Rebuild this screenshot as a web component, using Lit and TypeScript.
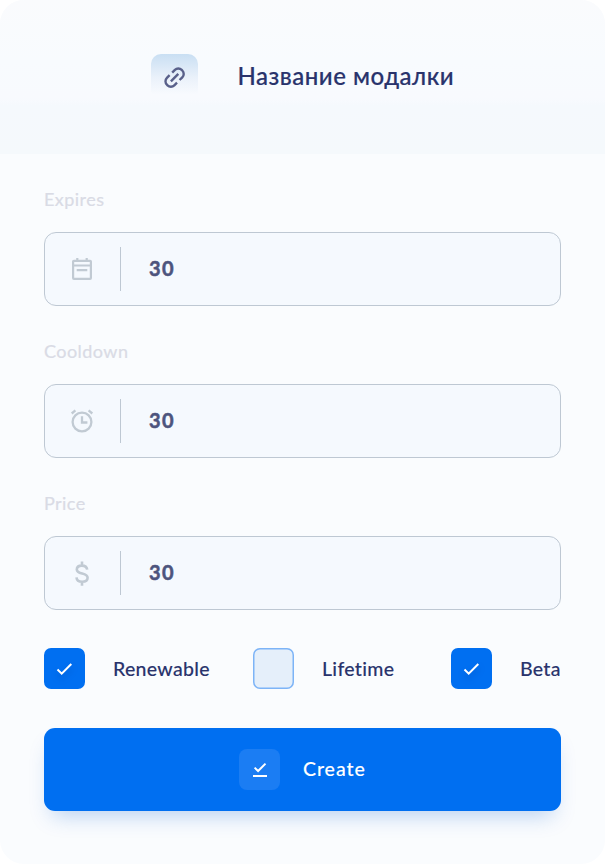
import { LitElement, html, css, svg } from "lit";
import { customElement, property } from "lit/decorators.js";

const icons = {
  calendar: svg`<g fill="none" stroke="currentColor" stroke-width="2.2"><rect x="3.1" y="3.8" width="17.8" height="18" rx="0.8"/><path d="M3 8.5h18M6.7 13.1h10.6M7.3 1v3M16.7 1v3"/></g>`,
  alarm: svg`<g fill="none" stroke="currentColor" stroke-width="2.3"><circle cx="12" cy="13" r="9.4"/><path d="M12 7.3v6.2h5.4M1.7 4.5l3.7-3.1M22.3 4.5l-3.7-3.1"/></g>`,
  dollar: svg`<path fill="none" stroke="currentColor" stroke-width="2.6" d="M17.2 8.7C16.9 6.1 14.8 4.6 11.8 4.6c-3.1 0-5 1.5-5 3.9 0 5.4 10.8 2.8 10.8 8.2 0 2.5-2.2 4-5.5 4-3.2 0-5.4-1.6-5.6-4.4M12 .6v4M12 20.7v4"/>`,
};

@customElement("field-row")
class FieldRow extends LitElement {
  @property() label = "";
  @property() value = "";
  @property() icon: keyof typeof icons = "calendar";

  static styles = css`
    :host { display: block; }
    .label { height: 24px; line-height: 22px; font-size: 18px; color: #d9dbe5; letter-spacing: 0.45px; margin-bottom: 20px; -webkit-text-stroke: 0.2px #d9dbe5; }
    .box { box-sizing: border-box; height: 74px; border: 1px solid #bec8d3; border-radius: 12px; background: #f5f9fe; display: flex; align-items: center; }
    .icon { box-sizing: border-box; width: 75px; padding-right: 2px; display: flex; justify-content: center; color: #c1cad3; }
    svg { overflow: visible; }
    .line { width: 1px; height: 44px; background: #bec8d3; }
    .value { margin: 0 0 2px 28px; font-size: 20px; line-height: 24px; font-weight: 700; color: #4d547d; letter-spacing: 1.3px; -webkit-text-stroke: 0.5px #4d547d; }
  `;

  render() {
    return html`
      <div class="label">${this.label}</div>
      <div class="box">
        <span class="icon"><svg width="24" height="24" viewBox="0 0 24 24">${icons[this.icon]}</svg></span>
        <span class="line"></span>
        <span class="value">${this.value}</span>
      </div>`;
  }
}

@customElement("check-item")
class CheckItem extends LitElement {
  @property() label = "";
  @property({ type: Boolean }) checked = false;

  static styles = css`
    :host { display: flex; align-items: center; }
    .box { box-sizing: border-box; flex: none; width: 41px; height: 41px; border-radius: 7px; box-shadow: inset 0 0 0 1.5px #7db4f7; background: #e5effa; display: flex; align-items: center; justify-content: center; }
    .on { box-shadow: none; background: #006ff1; }
    svg { filter: drop-shadow(0 4px 3px rgba(0, 50, 140, 0.3)); }
    .label { margin-left: 28px; font-size: 19.5px; line-height: 24px; font-weight: 500; color: #29336c; letter-spacing: 0.3px; font-variant-ligatures: none; -webkit-text-stroke: 0.1px #29336c; white-space: nowrap; }
  `;

  render() {
    return html`
      <span class="box ${this.checked ? "on" : ""}">
        ${this.checked
          ? html`<svg width="17" height="14" viewBox="0 0 17 14"><path d="M1.5 7.5l4.2 4.1L15.3 2" fill="none" stroke="#fff" stroke-width="2"/></svg>`
          : ""}
      </span>
      <span class="label">${this.label}</span>`;
  }
}

@customElement("app-root")
class AppRoot extends LitElement {
  static styles = css`
    :host { display: block; background: #fff; font-family: Lato, "Noto Sans", sans-serif; }
    .card { box-sizing: border-box; width: 605px; height: 864px; border-radius: 24px; overflow: hidden; background: #fafcfe; }
    .head { box-sizing: border-box; height: 154px; padding: 54px 0 0 151px; display: flex; align-items: flex-start; background: linear-gradient(#fafbfd 0, #f8fbfe 60px, #f8fafe 98px, #f5f9fd 106px, #f5f9fc 100%); }
    .badge { width: 47px; height: 47px; border-radius: 10px; background: linear-gradient(#c9dff3, #eaf1fa 50%, rgba(248, 250, 254, 0) 86%); display: flex; align-items: center; justify-content: center; }
    .title { margin: 6px 0 0 39.5px; font-size: 24px; line-height: 32px; font-weight: 500; color: #29336c; letter-spacing: 0.5px; white-space: nowrap; -webkit-text-stroke: 0.2px #29336c; }
    .body { padding: 34px 44px 0; }
    .fields { display: flex; flex-direction: column; gap: 34px; }
    .checks { display: grid; grid-template-columns: 209px 198px auto; margin-top: 38px; }
    .create { width: 100%; height: 83px; margin-top: 39px; padding: 0 0 0 195px; border: 0; border-radius: 11px; background: #006ff1; box-shadow: 0 12px 22px -8px rgba(0, 90, 205, 0.28); color: #fff; font: 500 19.5px/24px Lato, sans-serif; display: flex; align-items: center; }
    .save { width: 41px; height: 41px; border-radius: 8px; background: #1b7df3; display: flex; align-items: center; justify-content: center; }
    .text { margin: 0 0 2px 23px; letter-spacing: 0.95px; -webkit-text-stroke: 0.1px #fff; }
  `;

  render() {
    return html`
      <div class="card">
        <div class="head">
          <div class="badge">
            <svg width="22" height="22" viewBox="0 0 22 22" fill="none" stroke="#59608a" stroke-width="2.4">
              <path d="M6.9 14.3L14.3 6.9M8.2 5.6l2.7-2.7a4.8 4.8 0 0 1 6.8 0l.6.6a4.8 4.8 0 0 1 0 6.8l-2.7 2.7M13 15.6l-2.7 2.7a4.8 4.8 0 0 1-6.8 0l-.6-.6a4.8 4.8 0 0 1 0-6.8l2.7-2.7"/>
            </svg>
          </div>
          <div class="title">Название модалки</div>
        </div>
        <div class="body">
          <div class="fields">
            <field-row label="Expires" value="30" icon="calendar"></field-row>
            <field-row label="Cooldown" value="30" icon="alarm"></field-row>
            <field-row label="Price" value="30" icon="dollar"></field-row>
          </div>
          <div class="checks">
            <check-item label="Renewable" checked></check-item>
            <check-item label="Lifetime"></check-item>
            <check-item label="Beta" checked></check-item>
          </div>
          <button class="create">
            <span class="save">
              <svg width="14" height="16" viewBox="0 0 14 16" fill="none" stroke="#fff" stroke-width="2"><path d="M1.6 5.6l3.5 3.4L12.5 1.6M0 14h14"/></svg>
            </span>
            <span class="text">Create</span>
          </button>
        </div>
      </div>`;
  }
}
